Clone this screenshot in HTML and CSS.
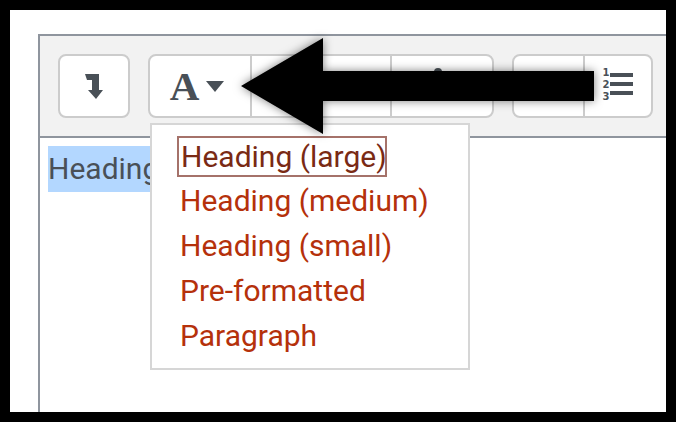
FILE: index.html
```html
<!DOCTYPE html>
<html>
<head>
    <meta charset="utf-8" />
    <title>Editor</title>
    <link rel="stylesheet" href="styles.css">
</head>
<body>
    <div id="frame">
        <div id="editor">
            <div id="toolbar">
                <div class="group">
                    <button class="tool tool-undo">
                        <svg width="18" height="25" viewBox="0 0 18 25"><path d="M0 0H14V16H18L11 25 3 16H7V6H2Z" fill="#495057"/></svg>
                    </button>
                </div>
                <div class="group">
                    <button class="tool tool-style">
                        <span class="glyph-a">A</span>
                        <svg width="18" height="11" viewBox="0 0 18 11"><path d="M0 0H18L9 11Z" fill="#495057"/></svg>
                    </button>
                    <button class="tool tool-wide"></button>
                    <button class="tool tool-wide">
                        <svg width="14" height="31" viewBox="0 0 14 31"><rect width="14" height="8" fill="#495057"/></svg>
                    </button>
                    <button class="tool tool-last">
                        <svg width="8" height="36" viewBox="0 0 8 36"><circle cx="4" cy="4" r="4" fill="#495057"/></svg>
                    </button>
                </div>
                <div class="group">
                    <button class="tool tool-list"></button>
                    <button class="tool tool-list-end">
                        <span class="numbers"><span>1</span><span>2</span><span>3</span></span>
                        <span class="bars"><i></i><i></i><i></i></span>
                    </button>
                </div>
            </div>
            <div id="content">
                <span class="selected">Heading</span>
                <ul id="menu">
                    <li class="current">Heading (large)</li>
                    <li>Heading (medium)</li>
                    <li>Heading (small)</li>
                    <li>Pre-formatted</li>
                    <li>Paragraph</li>
                </ul>
            </div>
        </div>
    </div>

    <svg id="arrow" width="354" height="96" viewBox="0 0 354 96"><path d="M0 48 82 0V33H353V63H82V96Z" fill="#000"/></svg>
</body>
</html>
```

FILE: styles.css
```css
* { margin: 0; border: 0; padding: 0; box-sizing: border-box; }

html, body { height: 100%; }

body {
    background: #000;
    padding: 10px;
    font-family: Roboto, "Liberation Sans", sans-serif;
}

#frame {
    background: #fff;
    height: 402px;
    padding: 24px 0 0 28px;
    overflow: hidden;
}

#editor {
    height: 100%;
    border-top: 2px solid #8f959e;
    border-left: 2px solid #8f959e;
    display: flex;
    flex-direction: column;
}

#toolbar {
    height: 102px;
    flex: none;
    background: #f2f2f2;
    border-bottom: 2px solid #8f959e;
    padding: 18px 12px 0 18px;
    display: flex;
    gap: 18px;
}

.group {
    display: flex;
    height: 64px;
    background: #fff;
    border: 2px solid #ccc;
    border-radius: 8px;
}

.tool, .tool-list-end {
    background: none;
    display: flex;
    align-items: center;
    justify-content: center;
    border-left: 2px solid #ccc;
}

.tool:first-child { border-left: 0; }

.tool-undo { width: 68px; }
.tool-style { width: 100px; gap: 7px; padding-right: 6px; }
.tool-wide { width: 70px; }
.tool-last { width: 102px; padding-right: 9px; }
.tool-list { width: 69px; }
.tool-list-end { width: 68px; gap: 1px; }

.glyph-a {
    font-family: "Liberation Serif", serif;
    font-weight: bold;
    font-size: 41px;
    line-height: 41px;
    color: #495057;
}

.numbers {
    display: flex;
    flex-direction: column;
    margin-top: -2px;
    font-family: "DejaVu Sans", sans-serif;
    font-weight: bold;
    font-size: 10px;
    line-height: 11.7px;
    color: #495057;
}

.bars {
    display: flex;
    flex-direction: column;
    gap: 5px;
    margin-top: -5px;
}

.bars i {
    display: block;
    width: 23px;
    height: 4px;
    background: #495057;
}

#content {
    position: relative;
    flex: 1;
    padding: 8px;
}

.selected {
    display: inline-block;
    background: #b3d7ff;
    color: #495057;
    font-size: 30px;
    line-height: 46px;
    height: 46px;
}

#menu {
    position: absolute;
    top: -15px;
    left: 110px;
    width: 320px;
    height: 247px;
    background: #fff;
    border: 2px solid #d6d6d6;
    list-style-type: none;
    padding: 11px 0 0 28px;
}

#menu li {
    color: #b5310b;
    font-size: 30px;
    line-height: 45px;
    white-space: nowrap;
}

#menu li.current {
    color: #7a2a14;
    width: 210px;
    height: 41px;
    line-height: 37px;
    margin: 0 0 1px -3px;
    padding-left: 2px;
    border: 2px solid #a5726a;
}

#arrow {
    position: absolute;
    top: 38px;
    left: 241px;
    filter: drop-shadow(0 0 5px rgba(0, 0, 0, 0.5));
}
```
